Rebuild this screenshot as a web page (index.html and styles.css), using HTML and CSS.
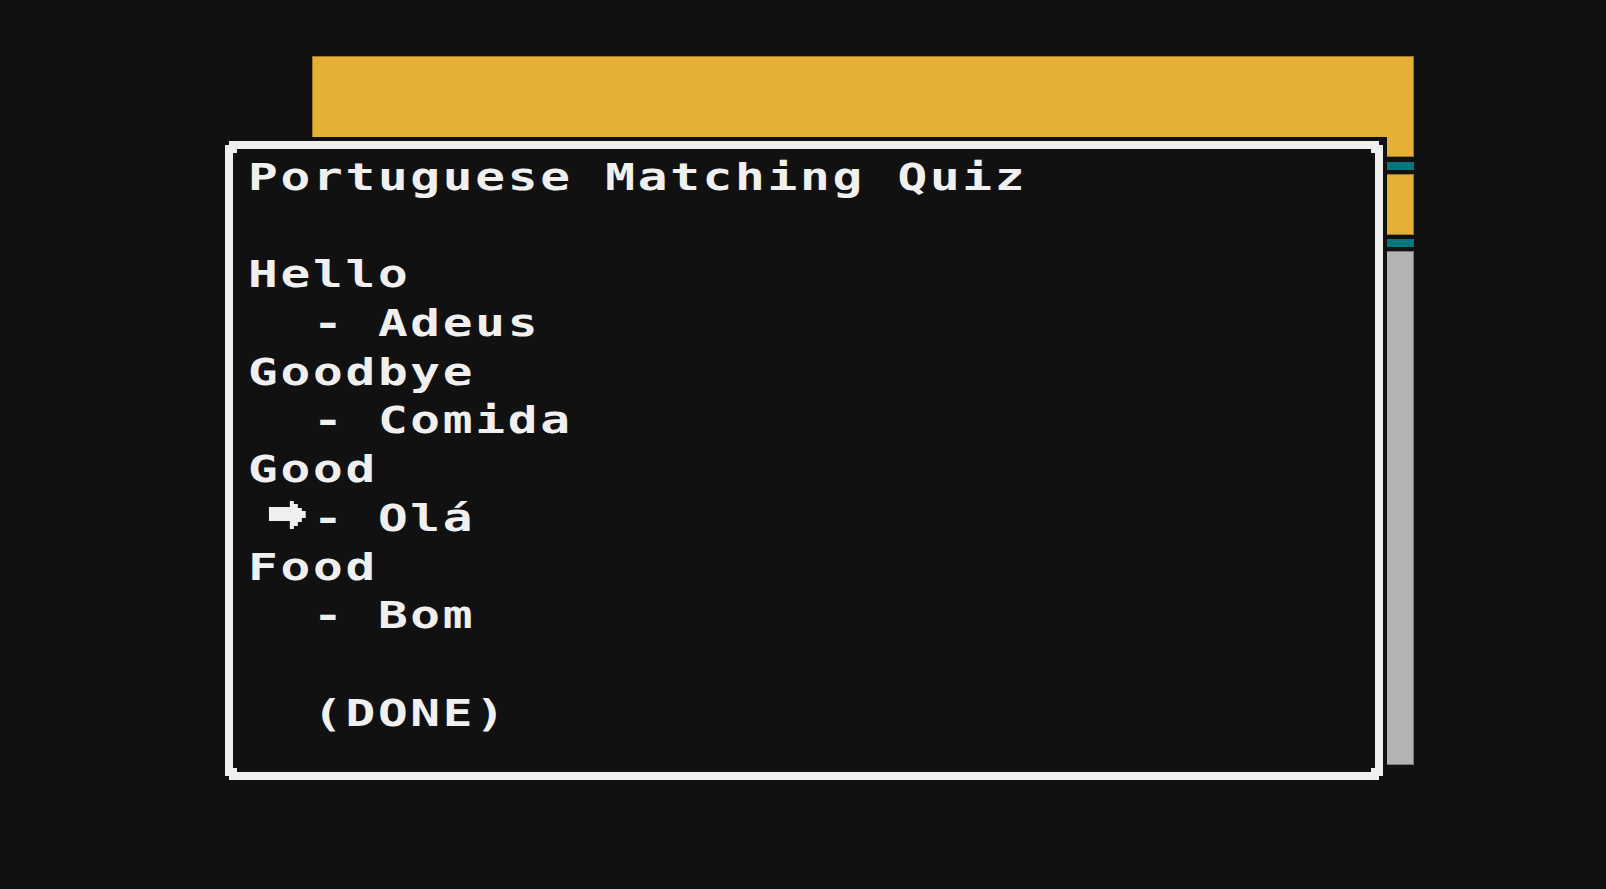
FILE: index.html
```html
<!DOCTYPE html>
<html lang="en">
<head>
  <meta charset="UTF-8">
  <meta name="viewport" content="width=device-width, initial-scale=1.0">
  <title>Portuguese Matching Quiz</title>
  <link rel="stylesheet" href="styles.css">
</head>
<body>
  <div class="stage">
    <!-- Window behind the dialog -->
    <div class="backdrop">
      <div class="band band-header"></div>
      <div class="band band-teal"></div>
      <div class="band band-yellow"></div>
      <div class="band band-teal"></div>
      <div class="band band-body"></div>
    </div>

    <!-- Quiz dialog -->
    <div class="dialog">
      <div class="frame">
        <div class="text">
          <div class="line">Portuguese Matching Quiz</div>
          <div class="line">&nbsp;</div>
          <div class="line">Hello</div>
          <div class="line">  - Adeus</div>
          <div class="line">Goodbye</div>
          <div class="line">  - Comida</div>
          <div class="line">Good</div>
          <div class="line selected"><svg class="cursor" width="37" height="28" viewBox="0 0 37 28"><path d="M0 6h21v14H0z M21 0h4v28h-4z M25 3h4v22h-4z M29 7h4v14h-4z M33 10h4v7h-4z" fill="#f0f0f0"/></svg>  - Olá</div>
          <div class="line">Food</div>
          <div class="line">  - Bom</div>
          <div class="line">&nbsp;</div>
          <div class="line">  (DONE)</div>
        </div>
      </div>
    </div>
  </div>
</body>
</html>
```

FILE: styles.css
```css
body {
  margin: 0;
  background: #111111;
  font-family: 'DejaVu Sans Mono', 'Liberation Mono', monospace;
}
.stage {
  position: relative;
  width: 1606px;
  height: 889px;
  padding: 56px 0 0 312px;
  box-sizing: border-box;
}

/* background window */
.backdrop {
  width: 1102px;
  height: 709px;
  display: flex;
  flex-direction: column;
}
.band {
  flex: none;
}
.band-header {
  height: 101px;
  background: #e6b034;
  box-shadow: inset 0 0 0 1px #9c7a24;
}
.band-teal {
  height: 8px;
  margin: 5px 0 4px;
  background: #00777c;
}
.band-yellow {
  height: 61px;
  background: #e6b034;
  box-shadow: inset 0 0 0 1px #9c7a24;
}
.band-yellow + .band-teal {
  margin-top: 4px;
}
.band-body {
  flex: 1;
  background: #b3b3b3;
  box-shadow: inset 0 0 0 1px #7a7a7a;
}

/* dialog over the window */
.dialog {
  position: absolute;
  left: 221px;
  top: 137px;
  padding: 4px;
  background: #111111;
}
.frame {
  width: 1158px;
  height: 639px;
  box-sizing: border-box;
  border: 8px solid #f0f0f0;
  padding: 4px 0 0 15px;
  background:
    linear-gradient(#f0f0f0, #f0f0f0) top left / 4px 4px no-repeat,
    linear-gradient(#f0f0f0, #f0f0f0) top right / 4px 4px no-repeat,
    linear-gradient(#f0f0f0, #f0f0f0) bottom left / 4px 4px no-repeat,
    linear-gradient(#f0f0f0, #f0f0f0) bottom right / 4px 4px no-repeat,
    #111111;
  clip-path: polygon(4px 0, calc(100% - 4px) 0, calc(100% - 4px) 4px, 100% 4px,
    100% calc(100% - 4px), calc(100% - 4px) calc(100% - 4px), calc(100% - 4px) 100%,
    4px 100%, 4px calc(100% - 4px), 0 calc(100% - 4px), 0 4px, 4px 4px);
  color: #f0f0f0;
}
/* blocky wide lettering: monospace stretched sideways */
.text {
  width: 800px;
  font-size: 38px;
  font-weight: bold;
  letter-spacing: 2.1px;
  line-height: 48.7px;
  transform: scaleX(1.3);
  transform-origin: left top;
}
.line {
  white-space: pre;
  height: 48.7px;
}
.selected {
  position: relative;
}
.cursor {
  position: absolute;
  left: 16px;
  top: 7px;
  transform: scaleX(0.77);
  transform-origin: left top;
}
```
